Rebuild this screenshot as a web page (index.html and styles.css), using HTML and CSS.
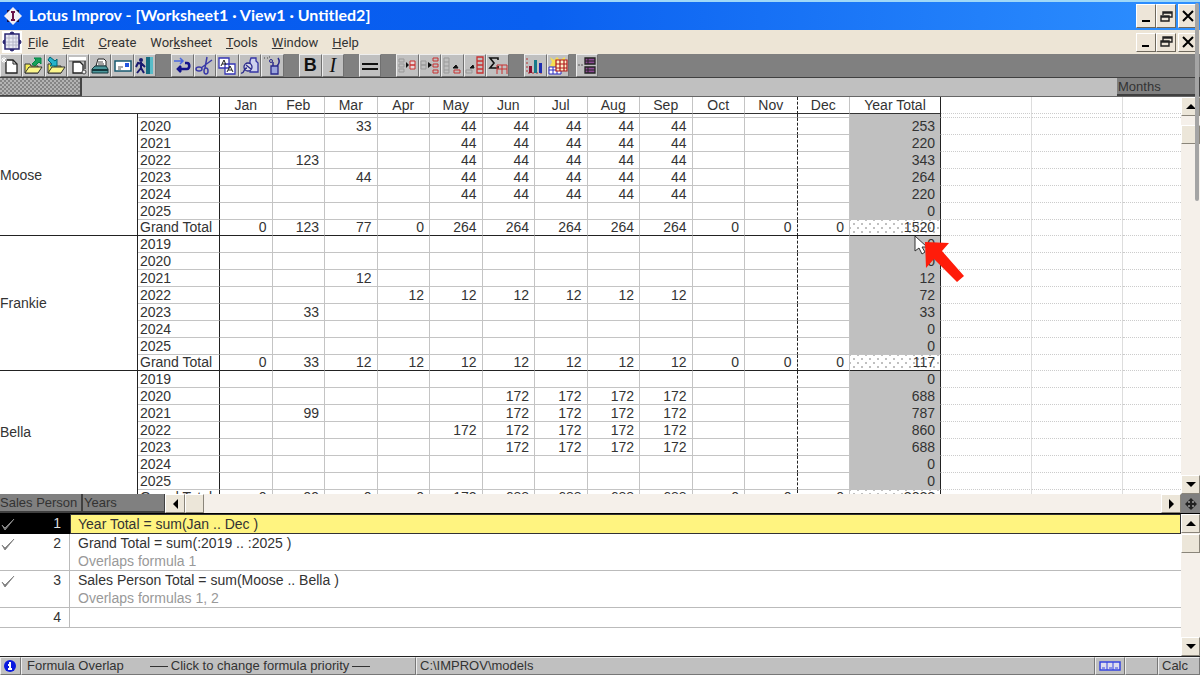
FILE: index.html
```html
<!DOCTYPE html>
<html lang="en">
<head>
    <meta charset="UTF-8">
    <meta name="viewport" content="width=device-width, initial-scale=1.0">
    <title>Lotus Improv</title>
    <link rel="stylesheet" href="styles.css">
</head>
<body>

    <div class="app">
        <header class="titlebar">
            <svg class="logo" width="18" height="18" viewBox="0 0 18 18">
                <path d="M3 3h4l2-2 2 2h4v4l2 2-2 2v4h-4l-2 2-2-2H3v-4L1 9l2-2z" fill="#16124a"/>
                <path d="M9 0l9 9-9 9-9-9z" fill="#f2eef4"/>
                <path d="M7 5h4M9 5v8M7 13h4" stroke="#6b1248" stroke-width="2"/>
            </svg>
            <h1>Lotus Improv - [Worksheet1 · View1 · Untitled2]</h1>
            <div class="win-buttons">
                <button aria-label="Minimize"><svg width="16" height="16"><path d="M4 13h8" stroke="#000" stroke-width="2"/></svg></button>
                <button aria-label="Restore"><svg width="16" height="16"><path d="M5 7V4h9v5h-3M5 5h9M3 8h8v5H3zM3 9h8" fill="none" stroke="#222" stroke-width="1.4"/></svg></button>
                <button aria-label="Close" class="close"><svg width="16" height="16"><path d="M3 3l10 10M13 3L3 13" stroke="#000" stroke-width="2"/></svg></button>
            </div>
        </header>

        <nav class="menubar">
            <svg class="doc-icon" width="20" height="22" viewBox="0 0 20 22">
                <path d="M0 0h20v22H0z" fill="#fff"/>
                <path d="M3 3h14v15H3z" fill="#e8e8f4" stroke="#2a2470" stroke-width="1.5"/>
                <path d="M7 4v13M11 4v13M14 4v13M4 7h12M4 11h12M4 14h12" stroke="#b6b6c8"/>
                <path d="M8 3a2 2 0 0 1 4 0M8 18a2 2 0 0 0 4 0M3 9a1 1 0 0 0 0 4M17 9a1 1 0 0 1 0 4" fill="#2a2470" stroke="#2a2470"/>
            </svg>
            <button><u>F</u>ile</button>
            <button><u>E</u>dit</button>
            <button><u>C</u>reate</button>
            <button>Wor<u>k</u>sheet</button>
            <button><u>T</u>ools</button>
            <button><u>W</u>indow</button>
            <button><u>H</u>elp</button>
            <div class="win-buttons small">
                <button aria-label="Minimize view"><svg width="16" height="16"><path d="M4 12h7" stroke="#000" stroke-width="2"/></svg></button>
                <button aria-label="Restore view"><svg width="16" height="16"><path d="M5 7V3h9v5h-3M5 4h9M3 7h8v5H3zM3 8h8" fill="none" stroke="#222" stroke-width="1.4"/></svg></button>
                <button aria-label="Close view" class="close"><svg width="16" height="16"><path d="M3 3l10 10M13 3L3 13" stroke="#000" stroke-width="2"/></svg></button>
            </div>
        </nav>

        <div class="toolbar">
            <div class="group g7">
                <button aria-label="New"><svg viewBox="0 0 20 20"><path d="M5 4h7l4 4v9H5z" fill="#fff" stroke="#222" stroke-width="1.3"/><path d="M12 4v4h4" fill="none" stroke="#222"/><path d="M3 1v6M0 4h6M1 2l4 4M5 2L1 6" stroke="#fff"/></svg></button>
                <button aria-label="Open"><svg viewBox="0 0 20 20"><path d="M2 17V8h5l1 2h7v7z" fill="#f5ee58" stroke="#333"/><path d="M2 17l4-6h13l-4 6z" fill="#fbf68c" stroke="#333"/><path d="M9 8l4-4-2-2h7v6l-2-2-4 4z" fill="#19a05a" stroke="#084"/></svg></button>
                <button aria-label="Save"><svg viewBox="0 0 20 20"><path d="M2 17V8h5l1 2h7v7z" fill="#f5ee58" stroke="#333"/><path d="M2 17l4-6h13l-4 6z" fill="#fbf68c" stroke="#333"/><path d="M4 1l5 4 2-2v7H4l2-2-4-4z" fill="#26b4cc" stroke="#067"/></svg></button>
                <button aria-label="Print preview"><svg viewBox="0 0 20 20"><path d="M1 1h17v4H1z" fill="#fff"/><path d="M1 5h17" stroke="#666"/><path d="M5 6h7l3 3v8H5z" fill="#fff" stroke="#222" stroke-width="1.3"/><path d="M17 5v8" stroke="#444" stroke-width="1.5"/><circle cx="16" cy="16" r="2" fill="#eee" stroke="#444"/></svg></button>
                <button aria-label="Print"><svg viewBox="0 0 20 20"><path d="M6 10l2-7h6l2 2v5z" fill="#fff" stroke="#222"/><path d="M8 6h5M8 8h6" stroke="#444"/><path d="M2 13l3-3h11l2 3v4H2z" fill="#4a969a" stroke="#12373c"/><path d="M2 14h16" stroke="#12373c" stroke-width="2"/></svg></button>
                <button aria-label="Mail"><svg viewBox="0 0 20 20"><path d="M2 5h16v10H2z" fill="#fff" stroke="#175a70" stroke-width="1.5"/><path d="M12 7h4v4h-4z" fill="#2255e0"/><path d="M5 11h5M5 13h3" stroke="#555"/></svg></button>
                <button aria-label="Exit"><svg viewBox="0 0 20 20"><path d="M11 1h4v17h-4z" fill="#156b80"/><path d="M15 1h3v17h-3z" fill="#58bcc8"/><circle cx="6" cy="4" r="2" fill="#191970"/><path d="M6 6v6l3 5M6 12l-4 5M1 11l2-4 4 1 3 3" fill="none" stroke="#191970" stroke-width="2"/></svg></button>
            </div>
            <div class="group g5">
                <button aria-label="Undo"><svg viewBox="0 0 20 20"><path d="M2 5h9M8 2l3 3-3 3" fill="none" stroke="#4866e0" stroke-width="1.5"/><path d="M13 7h2c3 0 3 6 0 6H6M9 10l-3 3 3 3" fill="none" stroke="#14148c" stroke-width="2.6"/></svg></button>
                <button aria-label="Cut"><svg viewBox="0 0 20 20" fill="none" stroke="#3a3aa8" stroke-width="1.5"><path d="M12 1l-2 11M17 4L6 12"/><ellipse cx="4" cy="13" rx="3" ry="2"/><ellipse cx="11" cy="15" rx="2" ry="3"/></svg></button>
                <button aria-label="Copy"><svg viewBox="0 0 20 20"><path d="M2 2h10v10H2zM8 8h10v10H8z" fill="#fff" stroke="#3434b4" stroke-width="1.3"/><path d="M4 10l3-6 2 5M5 8h3M10 16l3-6 3 6M11 14h4" fill="none" stroke="#222"/></svg></button>
                <button aria-label="Paste"><svg viewBox="0 0 20 20"><path d="M10 5l1-3h5v3l2 2v9h-8z" fill="#cfd2ee" stroke="#3434a4" stroke-width="1.3"/><circle cx="8" cy="11" r="4" fill="#d8d8e4" stroke="#2a2a8c" stroke-width="1.3"/><path d="M1 17c4 1 2-5 6-5M6 9l5 4" stroke="#2a2a8c" fill="none" stroke-width="1.3"/></svg></button>
                <button aria-label="Clear"><svg viewBox="0 0 20 20"><path d="M8 10h7v8H8z" fill="#9aa4dc" stroke="#2a2a8c" stroke-width="1.3"/><path d="M10 10V6M14 10c2-2 3-5 1-8" fill="none" stroke="#2a2a8c" stroke-width="1.5"/><circle cx="8" cy="5" r="1.5" fill="none" stroke="#2a2a8c"/><path d="M1 2h1M4 2h1M6 1h1" stroke="#444"/></svg></button>
            </div>
            <div class="group g2">
                <button class="bold">B</button>
                <button class="italic">I</button>
            </div>
            <div class="group">
                <button aria-label="Formula bar"><svg viewBox="0 0 20 20"><path d="M2 8h16M2 13h16" stroke="#111" stroke-width="2"/></svg></button>
            </div>
            <div class="group g5">
                <button aria-label="Insert item"><svg viewBox="0 0 20 20" fill="none"><path d="M2 3h5v3H2zM2 8h5v3H2zM2 13h5v3H2z" stroke="#999"/><path d="M13 5h5v4h-5zM13 9h5v4h-5z" stroke="#c83030" fill="#e8d8d8"/><path d="M9 6l3 3-3 3z" fill="#111"/></svg></button>
                <button aria-label="Insert items"><svg viewBox="0 0 20 20" fill="none"><path d="M1 5h5v4H1zM1 9h5v4H1z" stroke="#999"/><path d="M13 2h5v3h-5zM13 8h5v3h-5zM13 14h5v3h-5z" stroke="#c83030"/><path d="M8 6l4 3-4 3z" fill="#111"/></svg></button>
                <button aria-label="Add item"><svg viewBox="0 0 20 20" fill="none"><path d="M2 2h5v15H2zM2 6h5M2 10h5M2 14h5" stroke="#999"/><path d="M12 14h6v3h-6z" stroke="#c83030"/><path d="M11 12l3-3 2 3z" fill="#111" stroke="#111"/></svg></button>
                <button aria-label="Group items"><svg viewBox="0 0 20 20" fill="none"><path d="M1 14h6v3H1z" stroke="#999"/><path d="M12 1h6v16h-6zM12 5h6M12 9h6M12 13h6" stroke="#c83030" stroke-width="1.3"/><path d="M5 12l3-3 1 3z" fill="#111" stroke="#111"/></svg></button>
                <button aria-label="Sum"><svg viewBox="0 0 20 20" fill="none"><path d="M10 4V2H2l4 5-4 5h8v-2" stroke="#111" stroke-width="1.6"/><path d="M9 9h10M9 9v9M14 9v9M19 9v9M9 13h10" stroke="#c83030"/></svg></button>
            </div>
            <div class="group g2">
                <button aria-label="Chart"><svg viewBox="0 0 20 20"><path d="M2 2v15h16" fill="none" stroke="#b03030" stroke-dasharray="2 2"/><path d="M4 10h3v7H4z" fill="#8a1030"/><path d="M9 4h3v13H9z" fill="#147a8a"/><path d="M14 7h3v10h-3z" fill="#1c2cb0"/></svg></button>
                <button aria-label="Table"><svg viewBox="0 0 20 20"><path d="M2 1l4 3 3-3 3 3 5-3v5l-7 6-8-2 2-4z" fill="#f5e050"/><path d="M1 11h12v7H1zM5 11v7M9 11v7M1 14h12" fill="#fff" stroke="#2a2ac0"/><path d="M8 4h11v11H8zM12 4v11M16 4v11M8 8h11M8 12h11" fill="#fdf1c8" stroke="#b01818" stroke-width="1.2"/></svg></button>
            </div>
            <div class="group last">
                <button aria-label="Layout"><svg viewBox="0 0 20 20"><path d="M8 2h10v6H8zM8 11h10v6H8z" fill="#8c4a94" stroke="#222" stroke-width="1.3"/><path d="M11 2v6M11 11v6M8 14h10M8 5h10" stroke="#222"/><path d="M1 9h6" stroke="#555" stroke-dasharray="2 1"/></svg></button>
            </div>
        </div>

        <div class="category-bar">
            <div class="hatch"></div>
            <div class="category">Months</div>
        </div>

        <main class="worksheet">
            <div class="sheet">
                <table class="grid">
                    <colgroup>
                        <col class="c-person"><col class="c-year">
                        <col span="12">
                        <col class="c-total"><col class="c-total"><col class="c-total"><col class="c-rest">
                    </colgroup>
                    <thead>
                        <tr>
                            <td colspan="2" class="corner"></td>
                            <th>Jan</th><th>Feb</th><th>Mar</th><th>Apr</th><th>May</th><th>Jun</th><th>Jul</th><th>Aug</th><th>Sep</th><th>Oct</th><th class="page">Nov</th><th>Dec</th><th class="total">Year Total</th>
                            <td class="empty"></td><td class="empty"></td><td class="empty"></td>
                        </tr>
                    </thead>
                    <tbody id="rows"></tbody>
                </table>
                <svg class="cursor" width="54" height="50" viewBox="0 0 54 50">
                    <path d="M2 2v15l4-3 3 6 3-2-3-5h5z" fill="#fff" stroke="#333"/>
                    <path d="M12 8l24 1-7 8 22 25-7 6-23-23-8 9z" fill="#ff1c0a"/>
                </svg>
            </div>
            <div class="vscroll">
                <button aria-label="Scroll up"><i class="up"></i></button>
                <div class="thumb"></div>
                <button class="end" aria-label="Scroll down"><i class="down"></i></button>
            </div>
        </main>

        <div class="hbar">
            <div class="category person">Sales Person</div>
            <div class="category years">Years</div>
            <div class="hscroll">
                <button aria-label="Scroll left"><i class="left"></i></button>
                <div class="thumb"></div>
                <button class="end" aria-label="Scroll right"><i class="right"></i></button>
            </div>
            <div class="splitter"><svg width="14" height="14" viewBox="0 0 14 14"><path d="M7 1l3 3H8v2h2V4l3 3-3 3V8H8v2h2l-3 3-3-3h2V8H4v2L1 7l3-3v2h2V4H4z" fill="#222"/></svg></div>
        </div>

        <section class="formulas">
            <table class="formula-list">
                <tbody>
                    <tr class="active">
                        <th><svg class="tick" width="15" height="14"><path d="M2 7l3 5L14 1 5 10z"/></svg>1</th>
                        <td>Year Total = sum(Jan .. Dec )</td>
                    </tr>
                    <tr>
                        <th><svg class="tick" width="15" height="14"><path d="M2 7l3 5L14 1 5 10z"/></svg>2</th>
                        <td>Grand Total = sum(:2019 .. :2025 )<small>Overlaps formula 1</small></td>
                    </tr>
                    <tr>
                        <th><svg class="tick" width="15" height="14"><path d="M2 7l3 5L14 1 5 10z"/></svg>3</th>
                        <td>Sales Person Total = sum(Moose .. Bella )<small>Overlaps formulas 1, 2</small></td>
                    </tr>
                    <tr>
                        <th>4</th>
                        <td></td>
                    </tr>
                </tbody>
            </table>
            <div class="vscroll">
                <button aria-label="Formulas up"><i class="up"></i></button>
                <div class="thumb"></div>
                <button class="end" aria-label="Formulas down"><i class="down"></i></button>
            </div>
        </section>

        <footer class="statusbar">
            <div class="info"><svg width="14" height="14" viewBox="0 0 14 14"><circle cx="7" cy="7" r="6" fill="#0818e0"/><path d="M7 3v2M5 6h2v4M5 10h4" fill="none" stroke="#fff" stroke-width="2"/></svg></div>
            <div class="message"><span>Formula Overlap</span><span class="hint">Click to change formula priority</span></div>
            <div class="path">C:\IMPROV\models</div>
            <div class="mode"><svg width="22" height="10" viewBox="0 0 22 10"><path d="M1 1h20v8H1z" fill="#dde" stroke="#3444e0" stroke-width="1.5"/><path d="M8 1v8M14 1v8M3 7h3M10 7h3M16 7h3" stroke="#3444e0"/></svg></div>
            <div class="blank"></div>
            <div class="calc">Calc</div>
        </footer>

        <div class="overlay-scroll"></div>
    </div>

    <script src="script.js"></script>
</body>
</html>
```
FILE: styles.css
```css
* {
    box-sizing: border-box;
}
body {
    margin: 0;
    font-family: "Liberation Sans", Arial, sans-serif;
    font-size: 14px;
    color: #333;
    background-color: #fff;
}
button {
    font-family: inherit;
    padding: 0;
    border: none;
    color: #111;
}
.app {
    position: relative;
    display: flex;
    flex-direction: column;
    height: 100vh;
    overflow: hidden;
}

/* title and menu */
.titlebar {
    display: flex;
    align-items: center;
    flex: none;
    height: 30px;
    padding: 0 2px 0 4px;
    background: linear-gradient(to right, #0458ee, #0a60f0 45%, #2e90ff);
    border-top: 2px solid #9fd8f8;
}
.titlebar h1 {
    flex: 1;
    margin: 0 0 0 7px;
    font-family: Lato, sans-serif;
    font-size: 16px;
    line-height: 24px;
    padding-bottom: 2px;
    font-weight: 700;
    color: #fff;
    white-space: nowrap;
}
.win-buttons {
    display: flex;
    margin-left: auto;
}
.win-buttons button {
    display: flex;
    align-items: center;
    justify-content: center;
    width: 20px;
    height: 24px;
    background-color: #ede5d8;
    border: 1px solid;
    border-color: #fff #6e685c #6e685c #fff;
}
.win-buttons .close {
    margin-left: 2px;
}
.win-buttons.small button {
    height: 19px;
}
.menubar {
    display: flex;
    align-items: center;
    flex: none;
    height: 24px;
    padding: 0 2px;
    background-color: #ede5d6;
}
.menubar > button {
    margin-right: 14px;
    font-family: Roboto, sans-serif;
    font-size: 13px;
    color: #333;
    background: none;
}
.doc-icon {
    margin-right: 6px;
}

/* tool icons */
.toolbar {
    display: flex;
    flex: none;
    gap: 15px;
    height: 24px;
    background-color: #808080;
    border-bottom: 1px solid #404040;
}
.group {
    display: flex;
    width: 22px;
}
.group.g2 {
    width: 45px;
}
.group.g5 {
    width: 113px;
}
.group.g7 {
    width: 156px;
}
.group.last {
    margin-left: -8px;
}
.group button {
    flex: 1;
    display: flex;
    align-items: center;
    justify-content: center;
    background-color: #c0c0c0;
    border: 1px solid;
    border-color: #eee #707070 #707070 #eee;
}
.group svg {
    width: 20px;
    height: 20px;
}
.group .bold {
    font-size: 18px;
    font-weight: 700;
}
.group .italic {
    font-family: "Liberation Serif", serif;
    font-size: 20px;
    font-style: italic;
}

/* category tiles */
.category-bar {
    display: flex;
    justify-content: space-between;
    flex: none;
    height: 19px;
    background-color: #c0c0c0;
    border-bottom: 1px solid #666;
}
.hatch {
    width: 82px;
    background: repeating-conic-gradient(#858585 0 25%, #b4b4b4 0 50%) 0 0 / 4px 4px;
    border: solid #444;
    border-width: 0 2px 1px 0;
}
.category {
    line-height: 17px;
    font-size: 13px;
    background-color: #808080;
    border: solid #404040;
    border-width: 0 1px 2px 0;
}
.category-bar .category {
    width: 83px;
    padding-left: 1px;
}

/* worksheet */
.worksheet {
    display: flex;
    flex: 1;
    min-height: 0;
}
.sheet {
    position: relative;
    flex: 1;
    overflow: hidden;
}
.grid {
    width: 100%;
    table-layout: fixed;
    border-collapse: separate;
    border-spacing: 0;
}
.c-person {
    width: 138px;
}
.c-year {
    width: 82px;
}
.c-total {
    width: 91px;
}
.c-rest {
    width: 58px;
}
.grid th,
.grid td {
    height: 17px;
    padding: 0 5px 0 0;
    font-weight: 400;
    line-height: 16px;
    text-align: right;
    white-space: nowrap;
    border-right: 1px solid #c4c4c4;
    border-bottom: 1px solid #c4c4c4;
}
.grid thead th,
.grid thead td {
    padding: 0;
    text-align: center;
    border-bottom-color: #333;
}
.grid .corner,
.grid .year,
.grid .person,
.grid thead .total {
    border-right-color: #222;
}
.grid .person,
.grid .year {
    padding: 0 0 0 2px;
    text-align: left;
}
.grid .person {
    padding-left: 0;
    border-bottom-color: #222;
}
.grid .person.cut {
    padding-bottom: 12px;
}
.grid .page {
    border-right: 1px dashed #222;
}
.grid tbody .total {
    background-color: #c0c0c0;
    border-right-color: #222;
    border-bottom-color: #c0c0c0;
}
.grid .sliver td,
.grid .sliver th {
    height: 4px;
    line-height: 0;
}
.grid .sum td,
.grid .sum th {
    height: 16px;
    line-height: 15px;
    border-bottom-color: #222;
}
.grid .sum .total {
    background-color: #fff;
    background-image: radial-gradient(circle, #c0c0c0 1px, transparent 1px), radial-gradient(circle, #c0c0c0 1px, transparent 1px);
    background-size: 8px 8px;
    background-position: 0 0, 4px 4px;
    border-bottom-color: #222;
}
.grid thead .empty,
.grid tbody .empty {
    border-right: 1px solid #ddd;
    border-bottom: 1px dotted #ccc;
}
.grid tr .empty:last-child {
    border-right: none;
}
.cursor {
    position: absolute;
    left: 913px;
    top: 137px;
}

/* scrollbars */
.vscroll,
.hscroll {
    display: flex;
    background-color: #f5f0ea;
}
.vscroll {
    flex: none;
    flex-direction: column;
    width: 19px;
}
.hscroll {
    flex: 1;
}
.vscroll button,
.hscroll button,
.thumb {
    display: flex;
    align-items: center;
    justify-content: center;
    width: 19px;
    height: 19px;
    background-color: #ece6d9;
    border: 1px solid;
    border-color: #fff #8a857a #8a857a #fff;
}
.vscroll .thumb {
    margin-top: 9px;
}
.formulas .vscroll .thumb {
    margin-top: 1px;
}
.vscroll .end {
    margin-top: auto;
}
.hscroll .end {
    margin-left: auto;
}
.hscroll button {
    width: 20px;
}
.up,
.down,
.left,
.right {
    border: 5px solid transparent;
}
.up {
    border-top: none;
    border-bottom-color: #000;
}
.down {
    border-bottom: none;
    border-top-color: #000;
}
.left {
    border-left: none;
    border-right-color: #000;
}
.right {
    border-right: none;
    border-left-color: #000;
}
.hbar {
    display: flex;
    flex: none;
    height: 20px;
    border-bottom: 1px solid #000;
}
.hbar .person {
    width: 82px;
}
.hbar .years {
    width: 83px;
    padding-left: 1px;
    border-left: 1px solid #404040;
}
.splitter {
    display: flex;
    align-items: center;
    justify-content: center;
    width: 19px;
    background-color: #808080;
}

/* formula pane */
.formulas {
    display: flex;
    align-items: flex-start;
    flex: none;
    height: 142px;
}
.formulas .vscroll {
    height: 142px;
}
.formula-list {
    flex: 1;
    border-collapse: separate;
    border-spacing: 0;
}
.formula-list th,
.formula-list td {
    height: 20px;
    padding: 0 8px;
    font-weight: 400;
    line-height: 19px;
    text-align: left;
    vertical-align: top;
    border-bottom: 1px solid #bbb;
}
.formula-list th {
    width: 70px;
    text-align: right;
    border-right: 1px solid #bbb;
}
.formula-list small {
    display: block;
    font-size: 14px;
    line-height: 17px;
    color: #999;
}
.formula-list .active th {
    color: #ddd;
    background-color: #000;
    border-color: #000;
}
.formula-list .active td {
    padding-left: 7px;
    line-height: 18px;
    background-color: #fff480;
    border: 1px solid #333;
}
.tick {
    float: left;
    margin: 4px 0 0 -8px;
    fill: #777;
    stroke: #888;
}

/* status */
.statusbar {
    display: flex;
    flex: none;
    height: 19px;
    line-height: 16px;
    font-size: 13px;
    background-color: #c0c0c0;
    border-top: 1px solid #222;
}
.statusbar > div {
    border: 1px solid;
    border-color: #eee #777 #777 #eee;
}
.info {
    width: 21px;
    padding: 1px 2px;
}
.message {
    display: flex;
    gap: 26px;
    width: 395px;
    padding-left: 5px;
    white-space: nowrap;
}
.hint {
    display: flex;
    align-items: center;
    gap: 3px;
}
.hint::before,
.hint::after {
    content: "";
    width: 18px;
    border-top: 1px solid #333;
}
.path {
    flex: 1;
    padding-left: 3px;
}
.mode {
    width: 30px;
    padding: 3px;
}
.mode svg,
.info svg {
    display: block;
}
.blank {
    width: 33px;
}
.calc {
    width: 42px;
    padding-left: 3px;
}
.overlay-scroll {
    position: absolute;
    top: 3px;
    right: 1px;
    width: 4px;
    height: 198px;
    border-radius: 2px;
    background-color: #a4a4a4;
}
```
FILE: script.js
```js
const e = '';

// twelve months, then the year total
const people = [
    { name: 'Moose', rows: [
        ['2020', e, e, 33, e, 44, 44, 44, 44, 44, e, e, e, 253],
        ['2021', e, e, e, e, 44, 44, 44, 44, 44, e, e, e, 220],
        ['2022', e, 123, e, e, 44, 44, 44, 44, 44, e, e, e, 343],
        ['2023', e, e, 44, e, 44, 44, 44, 44, 44, e, e, e, 264],
        ['2024', e, e, e, e, 44, 44, 44, 44, 44, e, e, e, 220],
        ['2025', e, e, e, e, e, e, e, e, e, e, e, e, 0],
        ['Grand Total', 0, 123, 77, 0, 264, 264, 264, 264, 264, 0, 0, 0, 1520]
    ] },
    { name: 'Frankie', rows: [
        ['2019', e, e, e, e, e, e, e, e, e, e, e, e, 0],
        ['2020', e, e, e, e, e, e, e, e, e, e, e, e, 0],
        ['2021', e, e, 12, e, e, e, e, e, e, e, e, e, 12],
        ['2022', e, e, e, 12, 12, 12, 12, 12, 12, e, e, e, 72],
        ['2023', e, 33, e, e, e, e, e, e, e, e, e, e, 33],
        ['2024', e, e, e, e, e, e, e, e, e, e, e, e, 0],
        ['2025', e, e, e, e, e, e, e, e, e, e, e, e, 0],
        ['Grand Total', 0, 33, 12, 12, 12, 12, 12, 12, 12, 0, 0, 0, 117]
    ] },
    { name: 'Bella', rows: [
        ['2019', e, e, e, e, e, e, e, e, e, e, e, e, 0],
        ['2020', e, e, e, e, e, 172, 172, 172, 172, e, e, e, 688],
        ['2021', e, 99, e, e, e, 172, 172, 172, 172, e, e, e, 787],
        ['2022', e, e, e, e, 172, 172, 172, 172, 172, e, e, e, 860],
        ['2023', e, e, e, e, e, 172, 172, 172, 172, e, e, e, 688],
        ['2024', e, e, e, e, e, e, e, e, e, e, e, e, 0],
        ['2025', e, e, e, e, e, e, e, e, e, e, e, e, 0],
        ['Grand Total', 0, 99, 0, 0, 172, 688, 688, 688, 688, 0, 0, 0, 3023]
    ] }
];

// the first row is scrolled under the header, only its edge shows
people[0].rows.unshift(['', e, e, e, e, e, e, e, e, e, e, e, e, e]);

let html = '';
people.forEach(person => {
    person.rows.forEach((row, r) => {
        const kind = row[0] === 'Grand Total' ? 'sum' : row[0] === '' ? 'sliver' : '';
        html += `<tr class="${kind}">`;
        if (r === 0) {
            const cut = person.name === 'Bella' ? ' cut' : '';
            html += `<th class="person${cut}" rowspan="${person.rows.length}">${person.name}</th>`;
        }
        html += `<th class="year">${row[0]}</th>`;
        row.slice(1).forEach((value, i) => {
            const cls = i === 10 ? 'page' : i === 12 ? 'total' : '';
            html += `<td class="${cls}">${value}</td>`;
        });
        html += '<td class="empty"></td><td class="empty"></td><td class="empty"></td></tr>';
    });
});
document.getElementById('rows').innerHTML = html;
```
